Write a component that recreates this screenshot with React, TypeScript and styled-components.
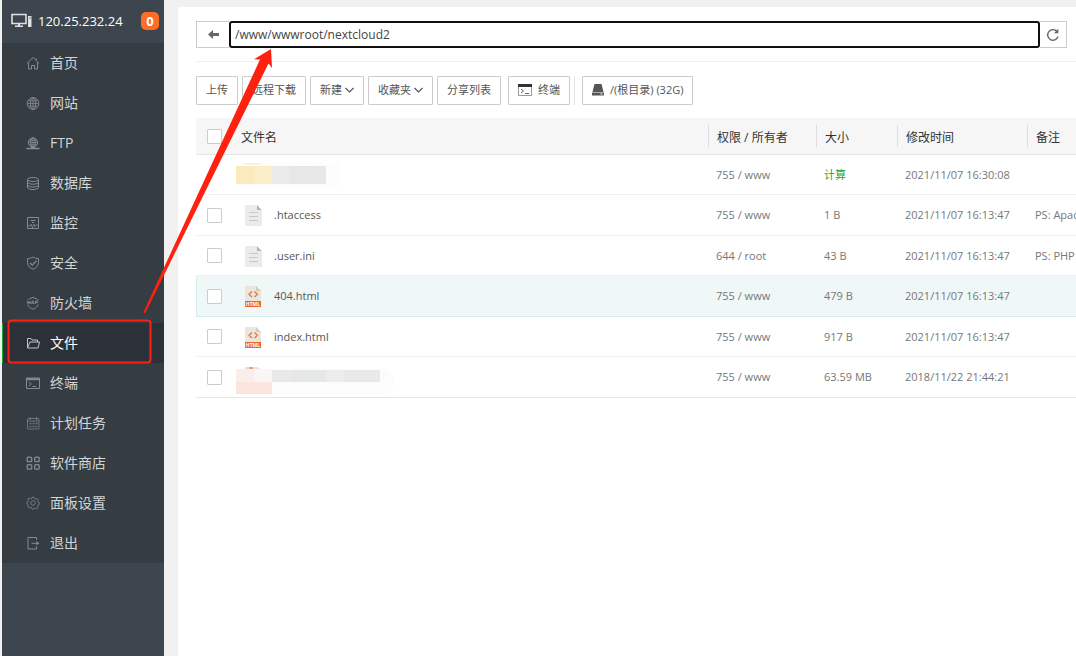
import React from "react";
import styled, { createGlobalStyle } from "styled-components";

const GlobalStyle = createGlobalStyle`
  * { box-sizing: border-box; }
  body {
    margin: 0;
    background: #f1f1f1;
    color: #555;
    font-family: "Open Sans", "Noto Sans CJK SC", sans-serif;
    font-size: 11px;
    line-height: 16px;
  }
  button, input { font: inherit; color: inherit; }
`;

const Page = styled.div`
  position: relative;
  display: flex;
  min-height: 100vh;
  padding-left: 2px;
  overflow: hidden;
`;

const Sidebar = styled.aside`
  flex: 0 0 162px;
  background: #3d454e;
`;

const Server = styled.header`
  display: flex;
  align-items: center;
  height: 43px;
  padding: 0 5px 2px 9px;
  gap: 6px;
  color: #fff;
  font-size: 13px;
`;

const ServerAddress = styled.span`
  flex: 1;
  white-space: nowrap;
`;

const Badge = styled.span`
  width: 18px;
  height: 18px;
  border-radius: 5px;
  background: #ff6c23;
  font-size: 13px;
  font-weight: 700;
  line-height: 18px;
  text-align: center;
`;

const Menu = styled.nav`
  background: #353c42;
`;

const MenuLink = styled.a<{ $active?: boolean }>`
  display: flex;
  align-items: center;
  gap: 10px;
  height: 40px;
  padding-left: 23px;
  border-left: 1px solid ${(p) => (p.$active ? "#20a53a" : "transparent")};
  background: ${(p) => (p.$active ? "#2c3037" : "transparent")};
  color: ${(p) => (p.$active ? "#fff" : "#d3d5d7")};
  font-size: 14px;
  line-height: 20px;
  text-decoration: none;
  svg { color: ${(p) => (p.$active ? "#c0c2c4" : "#868b8f")}; }
`;

const Panel = styled.main`
  flex: 1;
  min-width: 0;
  margin: 7px 0 0 14px;
  padding: 14px 0 0 18px;
  background: #fff;
`;

const PathBar = styled.form`
  display: flex;
  height: 27px;
  margin-right: 9px;
`;

const PathButton = styled.button<{ $side: "left" | "right" }>`
  display: grid;
  place-items: center;
  width: ${(p) => (p.$side === "left" ? 33 : 27)}px;
  padding: 0;
  border: 1px solid #ccc;
  border-${(p) => (p.$side === "left" ? "right" : "left")}: 0;
  background: #fff;
  color: #666;
`;

const PathInput = styled.input`
  flex: 1;
  min-width: 0;
  padding: 0 4px;
  border: 2px solid #101010;
  border-radius: 3px;
  outline: 0;
  background: #fff;
  color: #444;
  font-size: 12px;
`;

const Toolbar = styled.div`
  display: flex;
  align-items: center;
  gap: 4px;
  margin-top: 13px;
  padding: 14px 0 13px;
  border-top: 1px solid #eee;
`;

const ToolButton = styled.button`
  display: flex;
  align-items: center;
  gap: 3px;
  height: 29px;
  padding: 0 9px 1px;
  border: 1px solid #ccc;
  border-radius: 1px;
  background: #fff;
  white-space: nowrap;
`;

const ToolGroup = styled.div<{ $divided?: boolean }>`
  display: flex;
  padding: 0 0 0 ${(p) => (p.$divided ? 7 : 3)}px;
  border-left: ${(p) => (p.$divided ? "1px solid #e6e6e6" : "0")};
  button { gap: 6px; }
`;

const FileTable = styled.table`
  width: 100%;
  table-layout: fixed;
  border-collapse: separate;
  border-spacing: 0;
`;

const HeadCell = styled.th<{ $width?: number }>`
  width: ${(p) => (p.$width ? p.$width + "px" : "auto")};
  height: 37px;
  padding: 0;
  border-bottom: 1px solid #e6e6e6;
  background: #f6f6f6;
  color: #333;
  font-size: 12px;
  font-weight: 400;
  text-align: left;
  white-space: nowrap;
`;

const HeadLabel = styled.div<{ $divided?: boolean }>`
  height: 22px;
  padding-left: ${(p) => (p.$divided ? 8 : 9)}px;
  border-left: ${(p) => (p.$divided ? "1px solid #ddd" : "0")};
  line-height: 26px;
`;

const Row = styled.tr<{ $hover?: boolean }>`
  height: 40px;
  &:nth-child(even) { height: 41px; }
  background: ${(p) => (p.$hover ? "#eff8f7" : "#fff")};
  td { border-bottom: 1px solid ${(p) => (p.$hover ? "#d5ece8" : "#efefef")}; }
  td:first-child { border-left: 1px solid ${(p) => (p.$hover ? "#d5ece8" : "transparent")}; }
  &:last-child td { border-bottom-color: #e6e6e6; }
`;

const Cell = styled.td`
  padding: 0 0 0 8px;
  overflow: hidden;
  color: #777;
  white-space: nowrap;
`;

const CheckCell = styled.td`
  padding: 0 0 0 10px;
`;

const NameCell = styled.td`
  padding: 0;
`;

const FileName = styled.div`
  display: flex;
  align-items: center;
  gap: 12px;
  padding-left: 13px;
  color: #555;
`;

const HiddenName = styled.div`
  padding-left: 4px;
  svg { display: block; }
`;

const Check = styled.input`
  display: block;
  appearance: none;
  width: 15px;
  height: 15px;
  margin: 0;
  border: 1px solid #ccc;
  border-radius: 1px;
  background: #fff;
`;

const HeadCheck = styled(Check)`
  margin-left: 11px;
`;

const SizeLink = styled.a`
  color: #20a53a;
  text-decoration: none;
`;

const Annotation = styled.svg`
  position: absolute;
  left: 0;
  top: 0;
  pointer-events: none;
`;

const MenuIcon = ({ children }: { children: React.ReactNode }) => (
  <svg width="14" height="14" viewBox="0 0 14 14" fill="none" stroke="currentColor" aria-hidden="true">
    {children}
  </svg>
);

const shield = "M7 1C5.5 2.1 3.5 2.5 1.5 2.5v4.2c0 3 2.3 5.1 5.5 6.6 3.2-1.500 5.500-3.600 5.500-6.600V2.500C10.500 2.500 8.500 2.100 7 1Z";

const menu: { label: string; active?: boolean; icon: React.ReactNode }[] = [
  { label: "首页", icon: <path d="M.8 7.500 7 1.500l6.200 6M2.500 6.500v6.500h3V9.500h3V13h3V6.500M10.500 4V2.500" /> },
  {
    label: "网站",
    icon: (
      <>
        <circle cx="7" cy="7.500" r="5.800" />
        <ellipse cx="7" cy="7.500" rx="2.600" ry="5.800" />
        <path d="M7 2v11M1.500 7.500h11M2.300 4.800h9.400M2.300 10.200h9.400" strokeWidth=".8" />
      </>
    ),
  },
  {
    label: "FTP",
    icon: (
      <>
        <circle cx="7" cy="6.500" r="4.600" />
        <ellipse cx="7" cy="6.500" rx="2.200" ry="4.600" />
        <path d="M2.500 6.500h9M3.200 4.300h7.600M3.200 8.700h7.600M7 2v9" strokeWidth=".8" />
        <path d="M.5 12.500h13M5 11.500h4" strokeWidth="1.600" />
      </>
    ),
  },
  {
    label: "数据库",
    icon: (
      <>
        <ellipse cx="7" cy="3.500" rx="5.500" ry="2" />
        <path d="M1.500 3.500v8c0 1.200 2.500 2 5.500 2s5.500-.8 5.500-2v-8M1.500 6.200c0 1.200 2.500 2 5.500 2s5.500-.8 5.500-2M1.500 9c0 1.200 2.500 2 5.500 2s5.500-.8 5.500-2" />
      </>
    ),
  },
  {
    label: "监控",
    icon: (
      <>
        <path d="M1.500 1.500h11v11h-11zM4.500 4.500h5M6 6.500h2" />
        <path d="M2 10h2l1-2 1.500 4 1.500-4 1 2.500 1-1.500h2" strokeWidth=".8" />
      </>
    ),
  },
  {
    label: "安全",
    icon: (
      <>
        <path d={shield} />
        <path d="m4 6.800 2.200 2.300L10.500 4.800" strokeWidth="1.300" />
      </>
    ),
  },
  {
    label: "防火墙",
    icon: (
      <>
        <path d="M3 2.800C4.500 2.500 6 2 7 1.200 8 2 9.500 2.500 11 2.800M1.800 8.500c.5 2 2.500 3.600 5.200 4.800 2.700-1.200 4.700-2.800 5.200-4.800M2 3v1M12 3v1" />
        <path d="m1 4.800.9 3 1.100-2.500 1.100 2.500.9-3M5.500 8 6.800 4.800 8.200 8M6 7h1.800M9.500 8V5h3M9.500 6.500h2.500" strokeWidth=".9" />
      </>
    ),
  },
  {
    label: "文件",
    active: true,
    icon: <path d="M1.500 12V2.500h3.500l1 1.500h5.500v2M1.500 12 4 6h9.500l-1.500 6Z" />,
  },
  {
    label: "终端",
    icon: (
      <>
        <path d="M.5 2h13v10.500H.5z" />
        <path d="M.5 3.200h13" strokeWidth="2" />
        <path d="m3 6 2.300 2L3 10M6.500 10.500H10" />
      </>
    ),
  },
  {
    label: "计划任务",
    icon: (
      <g strokeOpacity=".7">
        <rect x="1.500" y="2.500" width="11.500" height="10.500" rx="1" />
        <path d="M1.500 5h11.500M4 1v3M10.500 1v3" />
        <path d="M3.500 7.500h8M3.500 10.500h8" strokeWidth="1.500" strokeDasharray="2 1" />
      </g>
    ),
  },
  {
    label: "软件商店",
    icon: (
      <g strokeWidth="1.300">
        <rect x="1.200" y="1.200" width="4.500" height="4.500" rx="1" />
        <rect x="8.700" y="1.200" width="4.500" height="4.500" rx="1" />
        <rect x="1.200" y="8.700" width="4.500" height="4.500" rx="1" />
        <rect x="8.700" y="8.700" width="4.500" height="4.500" rx="1" />
      </g>
    ),
  },
  {
    label: "面板设置",
    icon: (
      <g strokeOpacity=".75">
        <circle cx="7" cy="7" r="2.200" />
        <path d="m5.600 2.600.4-1.400h2l.4 1.400 1.300.5 1.300-.7 1.400 1.400-.7 1.300.5 1.200 1.200.4v1.600l-1.300.5-.5 1.200.7 1.400-1.400 1.300-1.300-.7-1.200.5L8 13H6l-.5-1.300-1.300-.5-1.300.7-1.300-1.400.7-1.300-.5-1.200L.8 7.600V6.100l1.200-.4.500-1.200-.7-1.300L3.100 2l1.300.9Z" />
      </g>
    ),
  },
  {
    label: "退出",
    icon: (
      <>
        <path d="M10.500 4V1.500h-8.500v11.500h8.500V10.500M5.500 7.300h7" />
        <path d="m10.500 5 2.800 2.300-2.800 2.300z" fill="currentColor" stroke="none" />
      </>
    ),
  },
];

const Chevron = () => (
  <svg width="9" height="6" viewBox="0 0 9 6" fill="none" stroke="#555" strokeWidth="1.200" aria-hidden="true">
    <path d="m.5 1 4 4 4-4" />
  </svg>
);

const TextFileIcon = () => (
  <svg width="17" height="22" viewBox="0 -1 17 22" aria-hidden="true">
    <path d="M0 0h12l5 5v16H0z" fill="#ebebeb" />
    <path d="M12 0v5h4.500z" fill="#b5b5b5" />
    <path d="M4 7.500h9M4 11.500h9M4 15.500h9" stroke="#c8c8c8" />
  </svg>
);

const HtmlFileIcon = () => (
  <svg width="17" height="22" viewBox="0 -1 17 22" aria-hidden="true">
    <path d="M0 0h11l5 5v16H0z" fill="#e9e7db" />
    <path d="M11 0v5h5z" fill="#d0cebf" />
    <path d="M7 5.500 4 8.300l3 2.700M9.500 5.500l3 2.800-3 2.700" fill="none" stroke="#f16a35" strokeWidth="1.200" />
    <path d="M0 15h16v6H0z" fill="#f0652f" />
    <text x="8" y="20" textAnchor="middle" fontSize="5" fontWeight="700" fill="#fff">HTML</text>
  </svg>
);

const FolderMosaic = () => (
  <svg width="110" height="26" viewBox="0 0 110 26" aria-hidden="true">
    <path d="M0 1h104v24H0z" fill="#fdfdfd" />
    <path d="M9 1h15v2H9z" fill="#fdf2de" />
    <path d="M0 4h18v18H0z" fill="#faeabc" />
    <path d="M18 4h18v18H18z" fill="#fbeec8" />
    <path d="M36 4h18v18H36z" fill="#eaeaeb" />
    <path d="M54 4h18v18H54z" fill="#e6e8e8" />
    <path d="M72 4h18v18H72z" fill="#e8e8e8" />
  </svg>
);

const ArchiveMosaic = () => (
  <svg width="160" height="34" viewBox="0 -6 160 34" aria-hidden="true">
    <rect x="-8" y="3" width="166" height="25" rx="12" fill="#fcfcfc" />
    <path d="M9 1h12l3 2H9z" fill="#e9ded8" />
    <path d="M13 1h4v2h-4z" fill="#f09a82" />
    <path d="M0 3h18v13H0z" fill="#fbeeea" />
    <path d="M18 3h18v13H18z" fill="#f9f6f5" />
    <path d="M0 16h36v12H0z" fill="#fbe5de" />
    <path d="M36 4h18v12H36z" fill="#e9e9ea" />
    <path d="M54 4h36v12H54z" fill="#e6e8e8" />
    <path d="M90 4h18v12H90z" fill="#ededee" />
    <path d="M108 4h36v12h-36z" fill="#e9e9e9" />
  </svg>
);

type FileRow = {
  id: string;
  kind: "text" | "html" | "folder" | "archive";
  name?: string;
  owner: string;
  size?: string;
  time: string;
  note?: string;
  hover?: boolean;
};

const files: FileRow[] = [
  { id: "folder", kind: "folder", owner: "755 / www", time: "2021/11/07 16:30:08" },
  { id: "htaccess", kind: "text", name: ".htaccess", owner: "755 / www", size: "1 B", time: "2021/11/07 16:13:47", note: "PS: Apache" },
  { id: "userini", kind: "text", name: ".user.ini", owner: "644 / root", size: "43 B", time: "2021/11/07 16:13:47", note: "PS: PHP" },
  { id: "404", kind: "html", name: "404.html", owner: "755 / www", size: "479 B", time: "2021/11/07 16:13:47", hover: true },
  { id: "index", kind: "html", name: "index.html", owner: "755 / www", size: "917 B", time: "2021/11/07 16:13:47" },
  { id: "archive", kind: "archive", owner: "755 / www", size: "63.59 MB", time: "2018/11/22 21:44:21" },
];

export default function App() {
  return (
    <Page>
      <GlobalStyle />
      <Sidebar>
        <Server>
          <svg width="21" height="15" viewBox="0 0 21 15" aria-hidden="true">
            <path d="M1 1.500h14v9H1z" fill="none" stroke="#dfe1e3" strokeWidth="1.600" />
            <path d="M7 10.500h2v2h3v1.500H4v-1.500h3zM17 3h3.500v11H17z" fill="#dfe1e3" />
            <path d="M18 5h2" stroke="#7d838a" />
          </svg>
          <ServerAddress>120.25.232.24</ServerAddress>
          <Badge>0</Badge>
        </Server>
        <Menu>
          {menu.map((item) => (
            <MenuLink key={item.label} href="#" $active={item.active}>
              <MenuIcon>{item.icon}</MenuIcon>
              {item.label}
            </MenuLink>
          ))}
        </Menu>
      </Sidebar>

      <Panel>
        <PathBar>
          <PathButton type="button" $side="left" aria-label="返回">
            <svg width="11" height="9" viewBox="0 0 11 9" aria-hidden="true">
              <path d="M0 4.500 5 0v3h6v3H5v3z" fill="currentColor" />
            </svg>
          </PathButton>
          <PathInput aria-label="路径" defaultValue="/www/wwwroot/nextcloud2" />
          <PathButton type="button" $side="right" aria-label="刷新">
            <svg width="14" height="14" viewBox="0 0 14 14" fill="none" stroke="currentColor" strokeWidth="1.400" aria-hidden="true">
              <path d="M11 3.500A5.300 5.300 0 1 0 12 8.500" />
              <path d="M12.300.8v4.500H8z" fill="currentColor" stroke="none" />
            </svg>
          </PathButton>
        </PathBar>

        <Toolbar>
          <ToolButton>上传</ToolButton>
          <ToolButton>远程下载</ToolButton>
          <ToolButton>新建<Chevron /></ToolButton>
          <ToolButton>收藏夹<Chevron /></ToolButton>
          <ToolButton>分享列表</ToolButton>
          <ToolGroup>
            <ToolButton>
              <svg width="14" height="12" viewBox="0 0 14 12" fill="none" aria-hidden="true">
                <path d="M.5.500h13v11H.5z" stroke="#999" />
                <path d="M0 1.500h14" stroke="#333" strokeWidth="3" />
                <path d="m3 5 2.500 2L3 9M7 9.500h4" stroke="#666" />
              </svg>
              终端
            </ToolButton>
          </ToolGroup>
          <ToolGroup $divided>
            <ToolButton>
              <svg width="12" height="12" viewBox="0 0 12 12" aria-hidden="true">
                <path d="M2.500 0h7l2 8H.5z" fill="#555" />
                <path d="M0 8.500h12V11.500H0z" fill="#555" />
                <path d="M8.500 10h2" stroke="#fff" />
              </svg>
              /(根目录) (32G)
            </ToolButton>
          </ToolGroup>
        </Toolbar>

        <FileTable>
          <thead>
            <tr>
              <HeadCell $width={36}><HeadCheck type="checkbox" aria-label="全选" /></HeadCell>
              <HeadCell><HeadLabel>文件名</HeadLabel></HeadCell>
              <HeadCell $width={108}><HeadLabel $divided>权限 / 所有者</HeadLabel></HeadCell>
              <HeadCell $width={81}><HeadLabel $divided>大小</HeadLabel></HeadCell>
              <HeadCell $width={130}><HeadLabel $divided>修改时间</HeadLabel></HeadCell>
              <HeadCell $width={49}><HeadLabel $divided>备注</HeadLabel></HeadCell>
            </tr>
          </thead>
          <tbody>
            {files.map((file) => (
              <Row key={file.id} $hover={file.hover}>
                <CheckCell>
                  {file.kind !== "folder" && <Check type="checkbox" aria-label={file.name ?? "选择"} />}
                </CheckCell>
                <NameCell>
                  {file.name ? (
                    <FileName>
                      {file.kind === "html" ? <HtmlFileIcon /> : <TextFileIcon />}
                      {file.name}
                    </FileName>
                  ) : (
                    <HiddenName>{file.kind === "folder" ? <FolderMosaic /> : <ArchiveMosaic />}</HiddenName>
                  )}
                </NameCell>
                <Cell>{file.owner}</Cell>
                <Cell>{file.size ?? <SizeLink href="#">计算</SizeLink>}</Cell>
                <Cell>{file.time}</Cell>
                <Cell>{file.note}</Cell>
              </Row>
            ))}
          </tbody>
        </FileTable>
      </Panel>

      <Annotation width="280" height="370" viewBox="0 0 280 370" aria-hidden="true">
        <rect x="8.500" y="320.500" width="142" height="42" rx="3" fill="none" stroke="#fb2114" strokeWidth="2" />
        <path d="M143.300 312.500 260 59.500l-6-.2L271 49l1 19-3.500-4.500L145.200 313.200z" fill="#ff2010" />
      </Annotation>
    </Page>
  );
}
